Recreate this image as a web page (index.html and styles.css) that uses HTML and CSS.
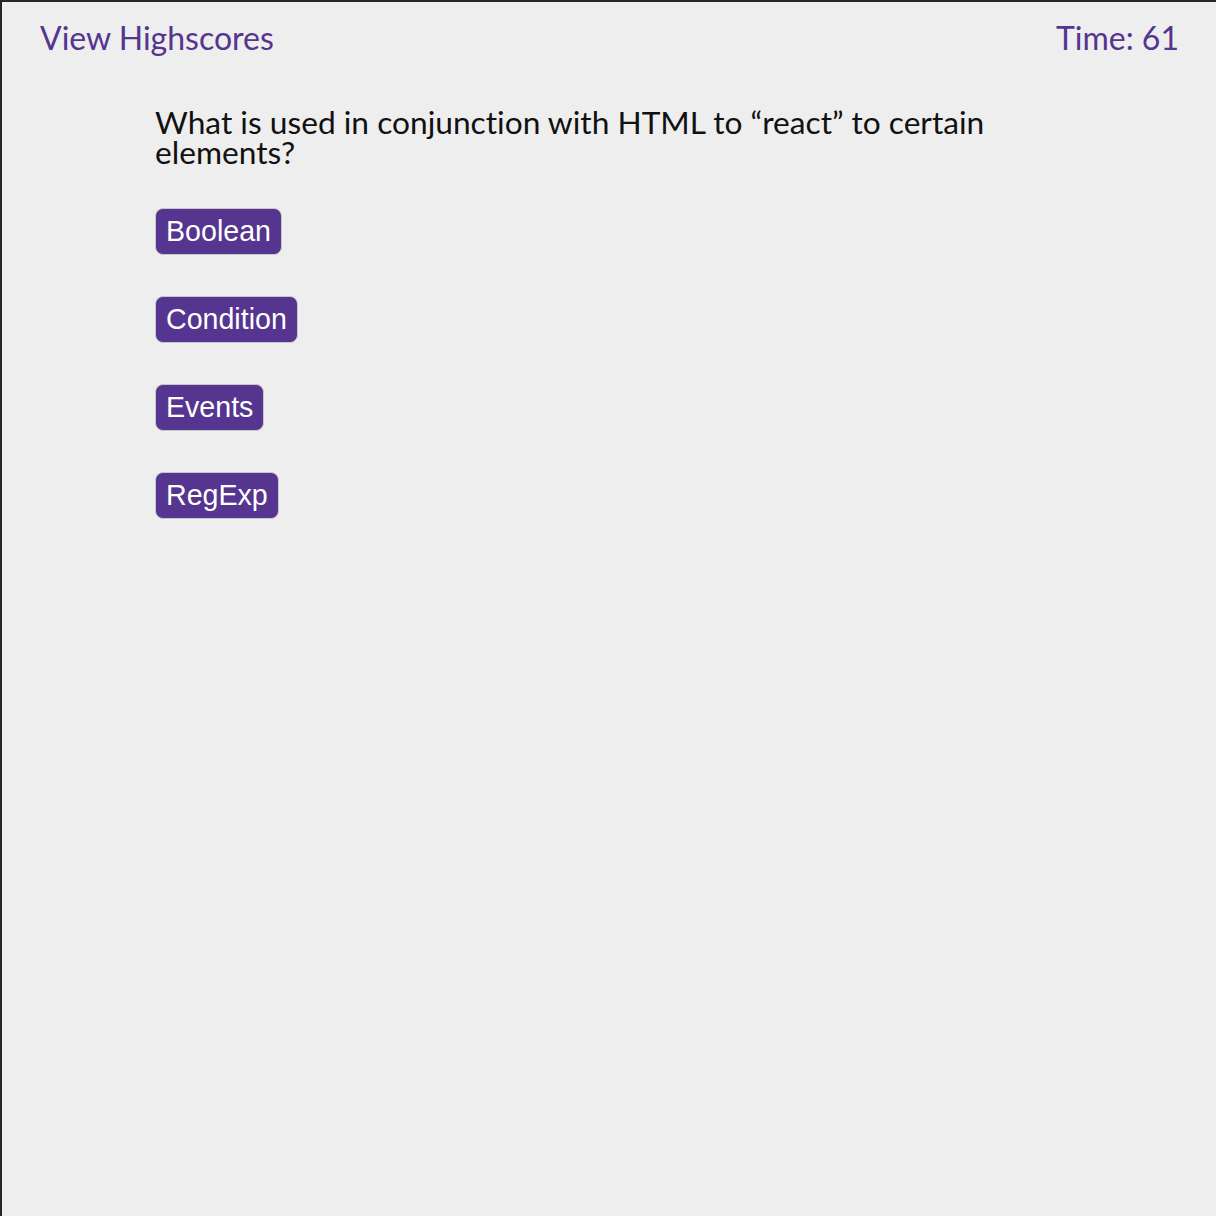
FILE: index.html
```html
<!DOCTYPE html>
<html>
<head>
<meta charset="utf-8">
<link rel="stylesheet" href="styles.css">
</head>
<body>
<div class="page">
  <header class="topbar">
    <a class="highscores">View Highscores</a>
    <span class="timer">Time: 61</span>
  </header>
  <main class="quiz">
    <h2 class="question">What is used in conjunction with HTML to “react” to certain elements?</h2>
    <div class="choices">
      <button class="choice">Boolean</button>
      <button class="choice">Condition</button>
      <button class="choice">Events</button>
      <button class="choice">RegExp</button>
    </div>
  </main>
</div>
</body>
</html>
```
FILE: styles.css
```css
html, body {
  margin: 0;
  padding: 0;
  height: 100%;
}
body {
  background: #eeeeee;
  font-family: "Lato", "Open Sans", sans-serif;
  font-variant-ligatures: none;
}
.page {
  box-sizing: border-box;
  min-height: 100vh;
  border-top: 2px solid #262626;
  border-left: 2px solid #262626;
  background: #eeeeee;
}
.topbar {
  display: flex;
  justify-content: space-between;
  align-items: center;
  padding: 14px 37px 0 38px;
  height: 43px;
}
.highscores, .timer {
  color: #55358f;
  font-size: 32px;
  line-height: 40px;
}
.quiz {
  padding: 48px 0 0 153px;
  width: 900px;
}
.question {
  margin: 0;
  font-weight: normal;
  font-size: 31.7px;
  line-height: 30px;
  color: #111;
}
.choices {
  display: flex;
  flex-direction: column;
  align-items: flex-start;
  gap: 41px;
  margin-top: 41px;
}
.choice {
  font-family: "Liberation Sans", Arial, sans-serif;
  font-size: 28.6px;
  letter-spacing: 0;
  color: #ffffff;
  background: #55358f;
  border: 1px solid #c8c8c8;
  border-radius: 8px;
  height: 47px;
  padding: 0 10px;
  line-height: 45px;
}
```
